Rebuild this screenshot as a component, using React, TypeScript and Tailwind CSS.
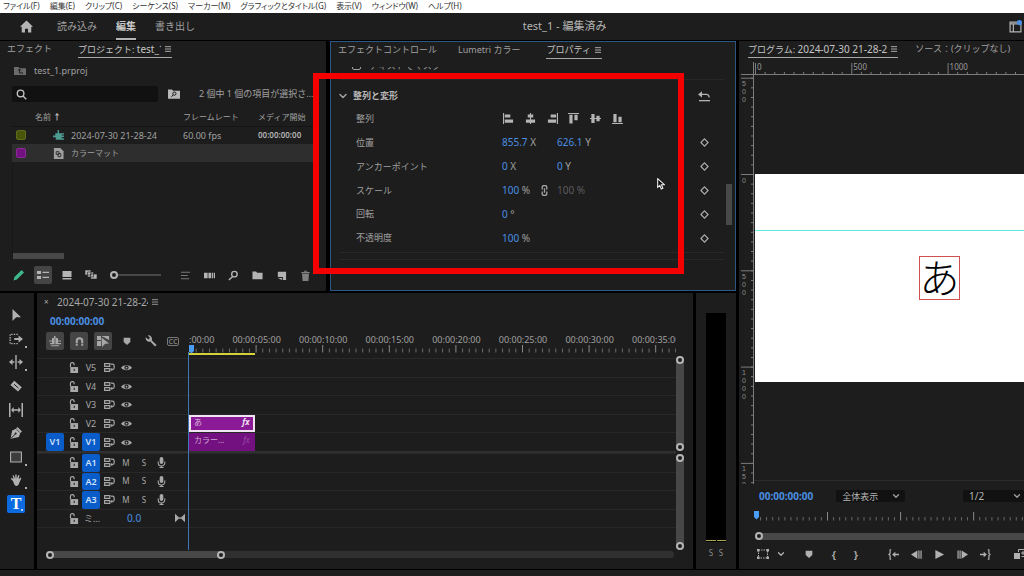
import type { ReactNode } from 'react';
import { ChevronDown, Menu } from 'lucide-react';

const menus = ['ファイル(F)', '編集(E)', 'クリップ(C)', 'シーケンス(S)', 'マーカー(M)', 'グラフィックとタイトル(G)', '表示(V)', 'ウィンドウ(W)', 'ヘルプ(H)'];

const SECONDS_WIDTH = 66.6 / 5;

function Icon({ children, size = 'size-3', label }: { children: ReactNode; size?: string; label?: string }) {
  return (
    <svg viewBox="0 0 12 12" className={`${size} shrink-0`} fill="currentColor" aria-label={label} aria-hidden={!label}>
      {children}
    </svg>
  );
}

const LockIcon = () => (
  <Icon label="lock" size="size-[11px]">
    <path d="M2.5 5.5h8.5V12H2.5z" />
    <path d="M2.7 5.5V3a2 2 0 0 1 4-.6v1.2" fill="none" stroke="currentColor" strokeWidth="1.3" />
    <path d="M6.2 7.4h1.1v2.4H6.2z" fill="#1d1d1d" />
  </Icon>
);

const SyncIcon = () => (
  <Icon label="sync lock" size="size-[11px]">
    <path d="M.7 1.8h5.6v3H.7zM.7 7.2h5.6v3H.7z" fill="none" stroke="currentColor" strokeWidth="1.3" />
    <path d="M7.5 2.4h1.6a2 2 0 0 1 2 2v1.8a2 2 0 0 1-2 2H7.5" fill="none" stroke="currentColor" strokeWidth="1.3" />
    <path d="M6.8 8.2 9 6.2v4z" />
  </Icon>
);

const EyeIcon = () => (
  <Icon label="toggle output" size="size-[11px]">
    <path d="M0 6.2C2.4 2.6 9.600 2.600 12 6.200 9.600 9.800 2.400 9.800 0 6.200z" />
    <circle cx="6" cy="6.2" r="2.300" fill="#1d1d1d" />
    <circle cx="6" cy="6.2" r="1" />
  </Icon>
);

const MicIcon = () => (
  <Icon label="voice over" size="size-[11px]">
    <rect x="4" y="0" width="4" height="7.5" rx="2" />
    <path d="M2.4 5v1.4a3.6 3.6 0 0 0 7.2 0V5M6 10v2M3.8 11.6h4.4" fill="none" stroke="currentColor" strokeWidth="1.2" />
  </Icon>
);

const MarkerIcon = ({ size = 'size-2' }: { size?: string }) => (
  <Icon size={size}>
    <path d="M1 1h10v6.5L6 12 1 7.5z" />
  </Icon>
);

const Ring = () => <span className="size-2 shrink-0 rounded-full border-2 border-[#b4b4b4] bg-[#1d1d1d]" />;

function Tab({ children, active, className = '' }: { children: ReactNode; active?: boolean; className?: string }) {
  return (
    <button
      className={`flex h-[17px] items-center gap-[3px] whitespace-nowrap border-b ${active ? 'border-[#a8a8a8] text-[#c4c4c4]' : 'border-transparent text-[#a0a0a0]'} ${className}`}
    >
      {children}
      {active && <Menu className="size-2" strokeWidth={2.5} />}
    </button>
  );
}

const projectTools = [
  <path d="M.5 11.5l1-3.4L8.6 1 11 3.4 3.9 10.5z" fill="#3fb88a" />,
  <path d="M0 2h4v3H0zM0 7h4v3H0zM5.5 2.8H12V4H5.5zM5.5 7.8H12V9H5.5z" />,
  <path d="M1.5 2h9v6h-9zM1.5 9h9v1.4h-9z" />,
  <path d="M0 1h6v5H0zM2.5 3h6v5h-6zM5.500 5H12v5H5.500z" stroke="#1d1d1d" strokeWidth=".6" />,
];

const projectActions = [
  <path d="M1 2h10v1.1H1zM1 5.5h7.5v1.1H1zM1 9h9v1.1H1z" opacity=".6" />,
  <path d="M0 3h4v6H0zM4.8 3h3v6h-3zM8.6 3h1.4v6H8.6zM10.8 3H12v6h-1.2z" />,
  <path d="M10 4.5a3 3 0 1 1-6 0 3 3 0 0 1 6 0zM5 7l-4 4" fill="none" stroke="currentColor" strokeWidth="1.5" />,
  <path d="M.5 1.5h4l1 1.4h6V10H.5z" />,
  <path d="M2 2h9v9H7.5V7.6H2zM2 8.6h4.5V11z" />,
  <path d="M1.5 2.2h9v1.3h-9zM4.3.8h3.4v1H4.3zM2.2 4.2h7.6L9.2 12H2.8z" opacity=".65" />,
];

function ProjectPanel() {
  return (
    <section className="flex min-w-0 flex-col overflow-hidden bg-[#1d1d1d] text-[9px]">
      <div className="flex pl-[7px]">
        <Tab>エフェクト</Tab>
        <Tab active className="ml-[26px]">
          <span className="w-[83px] overflow-hidden text-left">
            プロジェクト: <span className="text-[10px]">test_1</span>
          </span>
        </Tab>
      </div>
      <div className="flex h-[21px] items-center gap-2 pl-3.5 pt-1 text-[#a0a0a0]">
        <Icon>
          <path d="M0 2h4.5l1 1.2H12V10H0z" opacity=".6" />
          <path d="M4 5.5 5.5 4 7 5.5M5.5 4.3V8H9" fill="none" stroke="#1d1d1d" />
        </Icon>
        test_1.prproj
      </div>
      <div className="mt-[7px] flex items-center pl-3 text-[#a0a0a0]">
        <label className="flex h-4 w-[146px] items-center rounded-xs bg-[#111] pl-1">
          <Icon size="size-[11px]" label="検索">
            <path d="M8.6 4.8a3.6 3.6 0 1 1-7.2 0 3.6 3.6 0 0 1 7.2 0zM7.6 7.6l3.6 3.6" fill="none" stroke="#c0c0c0" strokeWidth="1.5" />
          </Icon>
          <input type="text" className="w-full min-w-0 bg-transparent px-1 outline-none" />
        </label>
        <button aria-label="検索ビン" className="ml-[10px] text-[#b8b8b8]">
          <Icon>
            <path d="M0 1.5h4l1 1.3h7v8H0z" />
            <path d="M8 5.6a1.6 1.6 0 1 1-3.2 0 1.6 1.6 0 0 1 3.2 0zM5.2 6.8 3.5 8.8" fill="none" stroke="#1d1d1d" />
          </Icon>
        </button>
        <span className="ml-[19px] whitespace-nowrap">2 個中 1 個の項目が選択さ…</span>
      </div>
      <table className="ml-3 mt-[7px] w-[302px] table-fixed text-left text-[#a0a0a0]">
        <thead>
          <tr className="h-[17px] border-b border-[#151515] text-[8px] leading-[12px]">
            <th className="w-[59px] whitespace-nowrap pl-[23px] font-normal">名前&nbsp;<b className="text-[#c4c4c4]">↑</b></th>
            <th className="w-28" />
            <th className="w-[75px] font-normal">フレームレート</th>
            <th className="font-normal">メディア開始</th>
          </tr>
        </thead>
        <tbody>
          <tr className="h-[18px]">
            <td className="pl-1">
              <div className="flex items-center gap-[27px]">
                <span className="size-[10px] rounded-xs border border-[#5f6b1c] bg-[#49540b]" />
                <Icon size="size-[11px]">
                  <path d="M0 6h2.500V3.500H5V0h1.500v3.500H12V5H9.500v1H12v1.500H9.500V9H12v1.500H3V8H0z" fill="#4c9c92" />
                </Icon>
              </div>
            </td>
            <td>2024-07-30 21-28-24</td>
            <td>60.00 fps</td>
            <td className="text-[8px] font-semibold text-[#b4b4b4]">00:00:00:00</td>
          </tr>
          <tr className="h-[18px] bg-[#2e2e2e]">
            <td className="pl-1">
              <div className="flex items-center gap-[27px]">
                <span className="size-[10px] rounded-xs border border-[#8a2a98] bg-[#741180]" />
                <Icon size="size-[11px]">
                  <path d="M1 0h7l3.5 3.5V12H1z" />
                  <path d="M3.500 4h3v3h-3zM5.500 6h3v3.500h-3z" fill="none" stroke="#2e2e2e" />
                </Icon>
              </div>
            </td>
            <td className="text-[8px]">カラーマット</td>
            <td />
            <td />
          </tr>
        </tbody>
      </table>
      <div className="ml-3 flex flex-1 items-end border-l border-[#181818]">
        <span className="h-1.5 w-[51px] bg-[#484848]" />
      </div>
      <div className="flex h-8 items-center pl-[7px] text-[#b4b4b4]">
        {projectTools.map((path, i) => (
          <span key={i} className="flex w-6 justify-center">
            <button className={`flex size-[18px] items-center justify-center rounded-xs ${i === 1 ? 'bg-[#454545]' : ''}`}>
              <Icon>{path}</Icon>
            </button>
          </span>
        ))}
        <input
          type="range"
          aria-label="サムネールのサイズ"
          defaultValue={0}
          className="ml-[7px] mr-3 h-[2px] w-[51px] appearance-none bg-[#484848] [&::-webkit-slider-thumb]:size-2 [&::-webkit-slider-thumb]:appearance-none [&::-webkit-slider-thumb]:rounded-full [&::-webkit-slider-thumb]:border-2 [&::-webkit-slider-thumb]:border-[#b4b4b4] [&::-webkit-slider-thumb]:bg-[#1d1d1d]"
        />
        {projectActions.map((path, i) => (
          <button key={i} className="flex w-6 justify-center">
            <Icon size="size-[11px]">{path}</Icon>
          </button>
        ))}
      </div>
    </section>
  );
}

const alignIcons = [
  <path d="M0 0h1.2v12H0zM2 1.5h6v3.5H2zM2 7h9v3.5H2z" />,
  <path d="M5.4 0h1.2v12H5.4zM3 1.5h6v3.5H3zM1 7h10v3.5H1z" />,
  <path d="M10.8 0H12v12h-1.2zM4 1.5h6v3.5H4zM1 7h9v3.5H1z" />,
  <path d="M0 0h12v1.2H0zM1.5 2h3.5v9.5H1.5zM7 2h3.5v6H7z" />,
  <path d="M0 5.4h12v1.2H0zM1.5 1h3.5v10H1.5zM7 3h3.5v6H7z" />,
  <path d="M0 10.8h12V12H0zM1.5 1h3.5v9H1.5zM7 4h3.5v6H7z" />,
];

function Value({ value, unit, disabled }: { value: string; unit: string; disabled?: boolean }) {
  return (
    <span className={`whitespace-nowrap text-[10px] ${disabled ? 'text-[#5c5c5c]' : 'text-[#a0a0a0]'}`}>
      <button className={disabled ? '' : 'text-[#4b8fe2]'}>{value}</button> {unit}
    </span>
  );
}

const properties = [
  { label: '位置', value: '855.7', unit: 'X', second: '626.1', secondUnit: 'Y' },
  { label: 'アンカーポイント', value: '0', unit: 'X', second: '0', secondUnit: 'Y' },
  { label: 'スケール', value: '100', unit: '%', second: '100', secondUnit: '%', linked: true },
  { label: '回転', value: '0', unit: '°' },
  { label: '不透明度', value: '100', unit: '%' },
];

function PropertiesPanel() {
  return (
    <section className="min-w-0 border border-[#2c5780] bg-[#1d1d1d] text-[9px] text-[#a0a0a0]">
      <div className="flex pl-[7px]">
        <Tab>エフェクトコントロール</Tab>
        <Tab className="ml-[21px]">Lumetri カラー</Tab>
        <Tab active className="ml-[26px]">プロパティ</Tab>
      </div>
      <div className="flex pt-2">
        <div className="min-w-0 flex-1">
          <div className="flex h-[3px] items-end gap-2 overflow-hidden pl-[21px]">
            <span className="size-[9px] shrink-0 rounded-xs border border-[#a0a0a0]" />
            <span className="leading-[9px]">テキストでマスク</span>
          </div>
          <div className="ml-[9px] mr-0.5 mt-[9px] border-t border-[#282828]" />
          <div className="flex h-[27px] items-center pl-[6px] pr-4 pt-1">
            <ChevronDown className="mr-1 size-3" strokeWidth={3} />
            <h2 className="flex-1 font-bold text-[#b8b8b8]">整列と変形</h2>
            <button aria-label="リセット" className="text-[#b4b4b4]">
              <Icon>
                <path d="M1 10h11v1.3H1z" />
                <path d="M2.5 4.4H8a2.6 2.6 0 0 1 3 3" fill="none" stroke="currentColor" strokeWidth="1.4" />
                <path d="M0 4.4 4 1.2v6.4z" />
              </Icon>
            </button>
          </div>
          <div className="flex h-[143px] flex-col pl-[25px] pr-4">
            <div className="flex flex-1 items-center">
              <span className="w-[147px]">整列</span>
              <div className="flex w-[120px] justify-between text-[#b4b4b4]">
                {alignIcons.map((path, i) => (
                  <button key={i}>
                    <Icon size="size-[11px]">{path}</Icon>
                  </button>
                ))}
              </div>
            </div>
            {properties.map((p) => (
              <div key={p.label} className="grid flex-1 grid-cols-[146px_55px_1fr_12px] items-center">
                <span>{p.label}</span>
                <span className="flex items-center justify-between pr-[7px]">
                  <Value value={p.value} unit={p.unit} />
                  {p.linked && (
                    <Icon label="リンク" size="size-[11px]">
                      <path d="M3.500 5V2.500a2.500 2 0 0 1 5 0V5M3.500 7v2.500a2.500 2 0 0 0 5 0V7M6 3.500v5" fill="none" stroke="currentColor" strokeWidth="1.500" />
                    </Icon>
                  )}
                </span>
                <span>{p.second && <Value value={p.second} unit={p.secondUnit} disabled={p.linked} />}</span>
                <button aria-label="キーフレーム" className="flex justify-center">
                  <Icon size="size-[9px]">
                    <path d="M6 1.2 10.8 6 6 10.8 1.2 6z" fill="none" stroke="#b0b0b0" strokeWidth="1.5" />
                  </Icon>
                </button>
              </div>
            ))}
          </div>
          <div className="mb-[30px] ml-[9px] mr-0.5 mt-0.5 h-2 border-y border-[#282828]" />
        </div>
        <div className="w-[9px] pt-[117px]">
          <div className="h-[41px] w-1.5 bg-[#484848]" />
        </div>
      </div>
    </section>
  );
}

const tools = [
  <path d="M2.5 0 11 8.2H6.2L2.5 12z" />,
  <>
    <path d="M7.5 2H1v8h6.5" fill="none" stroke="currentColor" strokeWidth="1.2" strokeDasharray="1.2 1" />
    <path d="M4.5 5.2h3.7V3L12 6 8.2 9V6.8H4.5z" />
  </>,
  <path d="M5.4 0h1.2v12H5.4zM4.6 5.3v1.4H3v1.8L0 6l3-2.5v1.8zM7.4 5.3v1.4H9v1.8L12 6 9 3.5v1.8z" />,
  <>
    <path d="M4.200.800 11.800 7.200 8 11.500.400 5z" />
    <path d="M4 4.200l4.500 4" stroke="#1d1d1d" />
  </>,
  <path d="M0 0h1.3v12H0zM10.700 0H12v12h-1.300zM4 5.400h4V3.500L10.200 6 8 8.500V6.600H4v1.900L1.800 6 4 3.500z" />,
  <>
    <path d="M7.500 0 12 4.500 10.300 6l-1.500 4L.500 11.800 2.200 3.400 6 1.800z" />
    <path d="M1 11.300 5.300 7" stroke="#1d1d1d" />
    <circle cx="5.600" cy="6.600" r="1" fill="#1d1d1d" />
    <path d="M6.500 2.200l3.400 3.400" stroke="#1d1d1d" strokeWidth=".7" />
  </>,
  <path d="M.6 1h10.8v10H.6z" fill="#3c3c3c" stroke="currentColor" strokeWidth="1.1" />,
  <path d="M3 7 .6 4.800l.9-.9L3.600 5 2.500 1.500l1.100-.3L5.200 4.600 5.300.5h1.300l.2 4L8.400 1l1.100.4-.9 3.800 1.900-1.800.9.800-2 4.300C9 10.500 7.800 12 6.300 12 4.600 12 3.800 9.500 3 7z" />,
];

function ToolBar() {
  return (
    <nav className="w-[34px] bg-[#1d1d1d] pt-[13px]">
      <div className="flex h-[207px] flex-col items-center justify-between pr-[2px] text-[#b0b0b0]">
        {tools.map((path, i) => (
          <button key={i} className="relative flex size-[18px] items-center justify-center">
            <Icon size={i === 1 || i === 2 || i === 4 ? 'size-3.5' : 'size-3'}>{path}</Icon>
            {[1, 2, 6, 7].includes(i) && <span className="absolute -right-0.5 bottom-0 size-0.5 bg-[#b0b0b0]" />}
          </button>
        ))}
        <button className="relative flex size-[18px] items-center justify-center rounded-xs bg-[#0a6be0] font-['Liberation_Serif',serif] text-[16px] font-bold leading-none text-white">
          T
          <span className="absolute bottom-0.5 right-0.5 size-0.5 bg-white/70" />
        </button>
      </div>
    </nav>
  );
}

function TimelineRuler() {
  const labels = [':00:00', '00:00:05:00', '00:00:10:00', '00:00:15:00', '00:00:20:00', '00:00:25:00', '00:00:30:00', '00:00:35:00'];
  return (
    <svg className="h-[25px] w-full self-end overflow-hidden">
      {labels.map((label, i) => (
        <text key={label} x={i === 0 ? 0 : i * 66.6 + 1} y="10" textAnchor={i === 0 ? 'start' : 'middle'} fill="#a0a0a0" fontSize="9">
          {label}
        </text>
      ))}
      {Array.from({ length: 110 }, (_, i) => (
        <path key={i} d={`M${i * 6.66 + 0.5} ${i % 10 === 0 ? 12 : 15.5}V19.5`} stroke={i % 10 === 0 ? '#8a8a8a' : '#6a6a6a'} />
      ))}
      <path d="M0 21H66" stroke="#d6d23a" strokeWidth="2" />
      <path d="M0 12h5v6l-2.5 2.5L0 18z" fill="#4b9cf5" />
    </svg>
  );
}

function Clip({ name, selected }: { name: string; selected?: boolean }) {
  return (
    <div
      className={`flex h-full items-start justify-between text-[8px] leading-[10px] ${selected ? 'border-2 border-[#f0e4f2] bg-[#8a1a96] px-[3px] text-[#d8b8dc]' : 'border-t-2 border-[#741180] bg-[#741180] px-[5px] text-[#d0a8d4]'}`}
      style={{ width: 5 * SECONDS_WIDTH - 1 }}
    >
      {name}
      <i className={selected ? 'font-bold text-[#f0e4f2]' : 'text-[#9a4ca4]'}>fx</i>
    </div>
  );
}

function TrackName({ name, on }: { name: string; on?: boolean }) {
  return (
    <button className={`h-full w-[18px] rounded-xs text-center text-[9px] ${on ? 'bg-[#0a5cc8] font-semibold text-[#d0e2fa]' : ''}`}>{name}</button>
  );
}

const videoTracks = [
  { name: 'V5' },
  { name: 'V4' },
  { name: 'V3' },
  { name: 'V2', clip: 'あ', selected: true },
  { name: 'V1', clip: 'カラー…', source: true },
];

const rowClass = 'flex min-h-0 flex-1 items-stretch border-t border-[#282828]';
const headClass = 'flex w-[152px] shrink-0 items-center pl-[9px] text-[#a8a8a8]';

function Timeline() {
  return (
    <section className="flex min-w-0 flex-1 flex-col bg-[#1d1d1d] text-[9px] text-[#a8a8a8]">
      <div className="flex h-[18px] items-center gap-[3px] pl-[7px]">
        <span className="w-[10px] text-[8px]">×</span>
        <span className="w-[91px] overflow-hidden whitespace-nowrap text-[10px]">2024-07-30 21-28-24</span>
        <Menu className="size-2" strokeWidth={2.5} />
      </div>
      <div className="relative flex flex-1 flex-col">
        <div className="flex h-[47px]">
          <div className="w-[152px] shrink-0">
            <button className="flex h-[21px] items-center pl-[13px] text-[10px] font-bold text-[#4b8fe2]">00:00:00:00</button>
            <div className="flex h-[18px] items-center gap-1.5 pl-[9px]">
              <button className="flex size-[18px] items-center justify-center rounded-xs bg-[#454545]">
                <Icon>
                  <path d="M0 5.500h3V3h2V1h1.500v2H9v2.500h3v1H9V8h3v1.200H1V8h2V6.500H0zM2 10.200h8v1H2z" />
                  <path d="M6 3.500v5.500" stroke="#454545" strokeWidth=".8" />
                </Icon>
              </button>
              <button className="flex size-[18px] items-center justify-center rounded-xs bg-[#454545]">
                <Icon size="size-[11px]">
                  <path d="M3 10.500V5.500a3 3 0 0 1 6 0v5" fill="none" stroke="currentColor" strokeWidth="2.200" />
                  <path d="M1 8.300h10" stroke="#454545" strokeWidth=".7" />
                </Icon>
              </button>
              <button className="flex size-[18px] items-center justify-center rounded-xs bg-[#454545]">
                <Icon>
                  <path d="M0 1h4v4H0zM5 1h7v4L7.500 2.500 5 1.500zM0 6h4v5H0zM4.500 2.500 12 8.500 8.200 8.800 5 12z" />
                </Icon>
              </button>
              <span className="flex w-[18px] justify-center"><MarkerIcon /></span>
              <span className="flex w-[18px] justify-center">
                <Icon>
                  <path d="M.800 2.200a3.500 3.500 0 0 0 4.500 4.300l4.700 5 1.600-1.600-4.900-4.700A3.500 3.500 0 0 0 2.800.400L5 2.700 3.400 4.500z" />
                </Icon>
              </span>
              <span className="ml-px flex h-[9px] w-3 items-center justify-center rounded-xs border border-[#777] text-[7px] font-bold leading-none text-[#777]">CC</span>
            </div>
          </div>
          <div className="mr-[17px] flex min-w-0 flex-1 flex-col justify-end">
            <TimelineRuler />
          </div>
        </div>
        <div className="flex flex-1">
          <div className="flex min-w-0 flex-1 flex-col">
            <div className="flex h-[93px] flex-col">
              {videoTracks.map((t) => (
                <div key={t.name} className={rowClass}>
                  <div className={headClass}>
                    <div className="h-full w-[18px]">{t.source && <TrackName name="V1" on />}</div>
                    <span className="ml-[3px] mr-[3px] flex w-3 justify-center"><LockIcon /></span>
                    <TrackName name={t.name} on={t.source} />
                    <span className="ml-[3px] flex w-3 justify-center"><SyncIcon /></span>
                    <span className="ml-[5px] flex w-3 justify-center"><EyeIcon /></span>
                  </div>
                  {t.clip && <Clip name={t.clip} selected={t.selected} />}
                </div>
              ))}
            </div>
            <div className="h-[2px] bg-[#303030]" />
            <div className="flex h-[75px] flex-col border-b border-[#282828]">
              {['A1', 'A2', 'A3'].map((name) => (
                <div key={name} className={rowClass}>
                  <div className={headClass}>
                    <span className="ml-[21px] mr-[3px] flex w-3 justify-center"><LockIcon /></span>
                    <TrackName name={name} on />
                    <span className="ml-[3px] flex w-3 justify-center"><SyncIcon /></span>
                    <button className="ml-[5px] w-3 text-center text-[8px]">M</button>
                    <button className="ml-1.5 w-3 text-center text-[8px]">S</button>
                    <span className="ml-[5px] flex w-3 justify-center"><MicIcon /></span>
                  </div>
                </div>
              ))}
              <div className={rowClass}>
                <div className={headClass}>
                  <span className="ml-[21px] mr-[5px] flex w-3 justify-center"><LockIcon /></span>
                  <span className="w-[43px]">ミ…</span>
                  <button className="flex-1 text-left text-[10px] text-[#4b8fe2]">0.0</button>
                  <span className="mr-1">
                    <Icon size="size-[10px]">
                      <path d="M0 1l5.4 5L0 11zM12 1 6.6 6l5.4 5zM5 5h2v2H5z" />
                    </Icon>
                  </span>
                </div>
              </div>
            </div>
          </div>
          <div className="flex w-[17px] flex-col gap-[3px]">
            <div className="-mt-0.5 flex h-[95px] w-2 flex-col justify-between rounded-full bg-[#484848]"><Ring /><Ring /></div>
            <div className="flex w-2 flex-1 flex-col justify-between rounded-full bg-[#484848]"><Ring /><Ring /></div>
          </div>
        </div>
        <div className="absolute bottom-0 left-[151px] top-[41px] w-px bg-[#3f78b8]" />
      </div>
      <div className="mb-[10px] ml-[9px] mr-[19px] flex h-[9px] items-center">
        <div className="h-[7px] w-full rounded-full bg-[#303030]">
          <div className="flex h-[7px] w-[179px] items-center justify-between rounded-full bg-[#484848]"><Ring /><Ring /></div>
        </div>
      </div>
    </section>
  );
}

function AudioMeters() {
  return (
    <section className="flex w-10 flex-col items-center bg-[#1d1d1d] pb-[10px] pt-5">
      <div className="grid w-5 flex-1 grid-cols-2 gap-px bg-black">
        <div className="mb-px border-b border-[#a8a44a]" />
        <div className="mb-px border-b border-[#a8a44a]" />
      </div>
      <div className="flex h-[17px] w-5 items-end justify-around text-[8px] leading-[12px] text-[#8a8a8a]">
        <button>S</button>
        <button>S</button>
      </div>
    </section>
  );
}

const UNITS_500 = 96.3;

function HorizontalRuler() {
  return (
    <svg className="h-[13px] w-full" stroke="#7c7c7c">
      <path d="M0 12.5H2000" />
      {Array.from({ length: 60 }, (_, i) => (
        <path key={i} d={`M${(i * UNITS_500) / 10 + 1.5} ${i % 10 === 0 ? 1 : 10}V12.5`} />
      ))}
      {[0, 500, 1000, 1500, 2000].map((n) => (
        <text key={n} x={(n / 500) * UNITS_500 + 3} y="8" fill="#9a9a9a" stroke="none" fontSize="8">{n}</text>
      ))}
    </svg>
  );
}

function VerticalRuler() {
  const origin = 99.5;
  const marks = [-500, 0, 500, 1000, 1500];
  return (
    <svg className="absolute inset-0 size-full font-['Liberation_Sans',sans-serif]" stroke="#7c7c7c">
      <path d="M12.5 0V2000" />
      {Array.from({ length: 60 }, (_, i) => (
        <path key={i} d={`M10 ${origin + ((i - 10) * UNITS_500) / 10}H12.5`} />
      ))}
      {marks.map((n) => {
        const y = origin + (n / 500) * UNITS_500;
        return (
          <g key={n}>
            <path d={`M0 ${y}H12.5`} />
            {String(Math.abs(n)).split('').map((digit, i) => (
              <text key={i} x="1" y={y + 8 + i * 8} fill="#8c8c8c" stroke="none" fontSize="7">{digit}</text>
            ))}
          </g>
        );
      })}
    </svg>
  );
}

const stepIcons = [
  <>
    <path d="M3.5.8H2.3v4L1 6l1.300 1.200v4h1.200" fill="none" stroke="currentColor" strokeWidth="1.3" />
    <path d="M4.500 6 8 3v2.200h4v1.600H8V9z" />
  </>,
  <path d="M7 1.5v9L0 6zM8 1.5h1.3v9H8zM10.3 1.5h1.3v9h-1.3z" />,
  <path d="M1.5 1 11 6l-9.5 5z" />,
  <path d="M5 1.5v9L12 6zM.5 1.5h1.3v9H.5zM2.700 1.500H4v9H2.700z" />,
  <>
    <path d="M8.500.800h1.200v4L11 6 9.700 7.200v4H8.500" fill="none" stroke="currentColor" strokeWidth="1.3" />
    <path d="M7.500 6 4 3v2.200H0v1.600h4V9z" />
  </>,
];

function ProgramPanel() {
  return (
    <section className="flex min-w-0 flex-col overflow-hidden bg-[#1d1d1d] text-[9px] text-[#a0a0a0]">
      <div className="flex pl-[9px]">
        <Tab active>
          <span>
            プログラム: <span className="text-[10px]">2024-07-30 21-28-2</span>
          </span>
        </Tab>
        <Tab className="ml-[17px]">ソース：(クリップなし)</Tab>
      </div>
      <div className="mt-1 grid flex-1 grid-cols-[13px_1fr] grid-rows-[13px_1fr] pl-[2px]">
        <div className="border-b border-r border-[#7c7c7c]" />
        <HorizontalRuler />
        <div className="relative"><VerticalRuler /></div>
        <div className="mb-[3px] border-b border-[#2c2c2c] pl-px">
          <div className="relative mt-[99px] h-52 bg-white">
            <div className="absolute inset-x-0 top-14 h-px bg-[#5eeee0]" />
            <div className="absolute left-[164px] top-[82px] flex h-11 w-[41px] items-center justify-center border border-[#d05050] pb-1 font-['Noto_Sans_CJK_JP',sans-serif] text-[40px] font-light leading-none text-black">
              あ
            </div>
          </div>
        </div>
      </div>
      <div className="flex h-6 items-center whitespace-nowrap pl-5">
        <button className="text-[10px] font-bold text-[#4b8fe2]">00:00:00:00</button>
        <label className="relative ml-[23px] flex items-center">
          <select aria-label="ズームレベル" className="h-3 w-[69px] appearance-none rounded-xs bg-[#111] pl-1.5 text-[9px] leading-none text-[#b4b4b4]">
            <option>全体表示</option>
          </select>
          <ChevronDown className="pointer-events-none absolute right-1 size-[10px]" strokeWidth={3} />
        </label>
        <label className="relative ml-auto flex items-center">
          <select aria-label="再生時の解像度" className="h-3 w-[61px] appearance-none rounded-xs bg-[#111] pl-1.5 text-[10px] leading-none text-[#b4b4b4]">
            <option>1/2</option>
          </select>
          <ChevronDown className="pointer-events-none absolute right-0.5 size-[10px]" strokeWidth={3} />
        </label>
      </div>
      <svg className="h-[18px] w-full shrink-0">
        {Array.from({ length: 60 }, (_, i) => (
          <path key={i} d={`M${21.5 + i * 6.09} ${(i + 1) % 12 === 0 ? 4 : 9}V12.5`} stroke={(i + 1) % 12 === 0 ? '#8a8a8a' : '#666'} />
        ))}
        <path d="M15 3h5v6l-2.5 2.5L15 9z" fill="#4b9cf5" />
      </svg>
      <div className="flex h-5 items-center pl-4">
        <div className="flex h-[7px] w-full items-center rounded-l-full bg-[#484848]"><Ring /></div>
      </div>
      <div className="mb-[7px] flex h-4 items-center pl-[18px] text-[#b0b0b0]">
        <button>
          <Icon>
            <path d="M1.5 2h9v8h-9z" fill="none" stroke="currentColor" strokeDasharray="1.5 1" />
            <path d="M0 1h2.5v2.5H0zM9.5 1H12v2.5H9.5zM0 8.5h2.5V11H0zM9.5 8.5H12V11H9.5z" />
          </Icon>
        </button>
        <button className="ml-[7px]"><ChevronDown className="size-[10px]" strokeWidth={3} /></button>
        <button aria-label="マーカーを追加" className="ml-[19px]"><MarkerIcon /></button>
        <button className="ml-[15px] w-3 text-[11px] font-semibold leading-none">{'{'}</button>
        <button className="ml-[10px] w-3 text-[11px] font-semibold leading-none">{'}'}</button>
        <div className="ml-[26px] flex gap-3">
          {stepIcons.map((path, i) => (
            <button key={i}><Icon size="size-[11px]">{path}</Icon></button>
          ))}
        </div>
        <button className="ml-auto w-[10px] overflow-hidden">
          <Icon>
            <path d="M0 5h6v6H0z" />
            <path d="M4.5 4V1.5H12v7H7.500M7 5h4M9 3v4" fill="none" stroke="currentColor" />
          </Icon>
        </button>
      </div>
    </section>
  );
}

export default function App() {
  return (
    <div className="relative flex min-h-screen flex-col overflow-hidden bg-black font-['Noto_Sans','Noto_Sans_CJK_JP',sans-serif]">
      <nav className="flex h-[13px] items-center gap-[10px] whitespace-nowrap bg-white pb-px pl-[3px] text-[8px] leading-none text-[#333] [font-feature-settings:'palt']">
        {menus.map((m) => (
          <button key={m}>{m}</button>
        ))}
      </nav>
      <header className="mb-px flex h-[27px] items-center bg-[#1d1d1d] text-[10px] text-[#a0a0a0]">
        <button aria-label="ホーム" className="ml-5 mr-6 text-[#b4b4b4]">
          <Icon size="size-[13px]">
            <path d="M6 .5 12 6.2h-1.6v5.3H7.4V8H4.6v3.5H1.6V6.2H0z" />
          </Icon>
        </button>
        <button className="h-full border-y-2 border-transparent">読み込み</button>
        <button className="ml-[19px] h-full border-y-2 border-b-[#b4b4b4] border-t-transparent font-bold text-[#c8c8c8]">編集</button>
        <button className="ml-[19px] h-full border-y-2 border-transparent">書き出し</button>
        <h1 className="ml-[32%] text-[11px] text-[#b4b4b4]">test_1 - 編集済み</h1>
        <button aria-label="ワークスペース" className="ml-auto mr-0.5 text-[#b4b4b4]">
          <Icon size="size-[13px]">
            <path d="M1 2h10v9H1zM1 3.5h7M4 3.500V11" fill="none" stroke="currentColor" strokeWidth="1.1" />
            <circle cx="9.600" cy="2.400" r="2.400" fill="#4b8fe2" />
          </Icon>
        </button>
      </header>
      <main className="grid flex-1 grid-cols-[736fr_285fr] gap-[3px]">
        <div className="flex min-w-0 flex-col gap-0.5">
          <div className="grid grid-cols-[326fr_406fr] gap-1">
            <ProjectPanel />
            <PropertiesPanel />
          </div>
          <div className="flex flex-1 gap-[3px]">
            <ToolBar />
            <Timeline />
            <AudioMeters />
          </div>
        </div>
        <ProgramPanel />
      </main>
      <footer className="mt-px h-1.5 bg-[#1d1d1d]" />
      <div className="pointer-events-none absolute left-[313px] top-[73px] h-[201px] w-[371px] border-[6px] border-[#f40000]" />
      <svg viewBox="0 0 12 18" className="pointer-events-none absolute left-[657px] top-[178px] h-3 w-2">
        <path d="M1 1v13l3.200-3 2.200 5.500 2.400-1L6.600 10H11z" fill="#111" stroke="#eee" strokeWidth="1.600" />
      </svg>
    </div>
  );
}
